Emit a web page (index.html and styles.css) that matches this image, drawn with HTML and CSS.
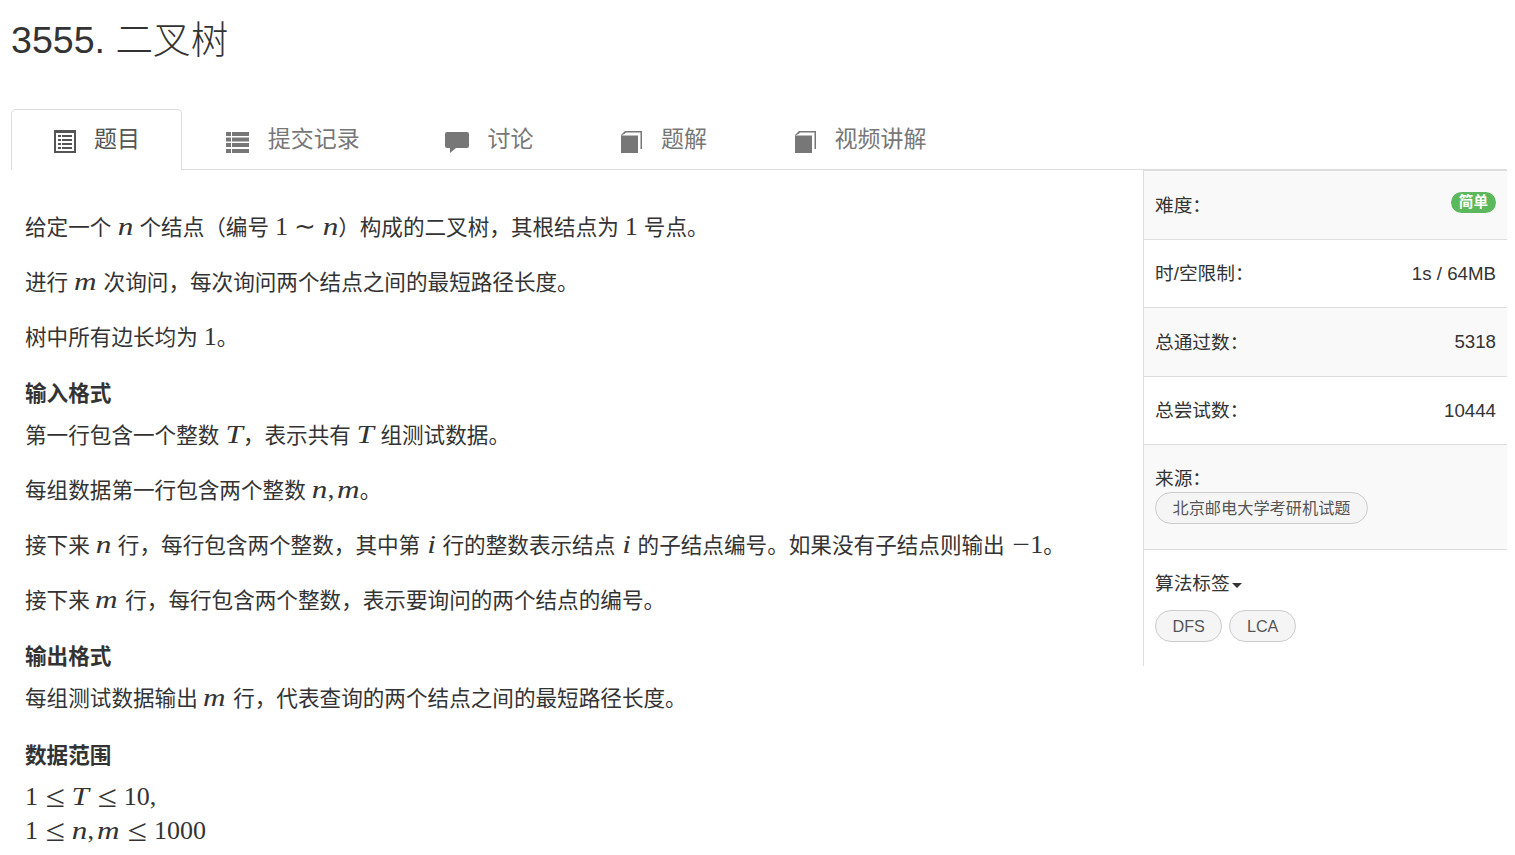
FILE: index.html
```html
<!DOCTYPE html>
<html lang="zh-CN">
<head>
    <meta charset="UTF-8">
    <meta name="viewport" content="width=device-width, initial-scale=1.0">
    <title>3555. 二叉树</title>
    <link rel="stylesheet" href="styles.css">
</head>
<body>
    <div class="container">
        <h1 class="title">3555. 二叉树</h1>

        <div class="tabs">
            <a class="tab active">
                <svg class="tab-icon" viewBox="0 0 24 23"><path fill-rule="evenodd" d="M2 0h22v23H2zM4 3v18h18V3z"/><path d="M6 5h3v2H6zM10 5h10v2H10zM6 9h3v2H6zM10 9h10v2H10zM6 13h3v2H6zM10 13h10v2H10zM6 17h3v2H6zM10 17h10v2H10z"/></svg>
                <span>题目</span>
            </a>
            <a class="tab">
                <svg class="tab-icon" viewBox="0 0 24 23"><path d="M0 2h5v4H0zM6 2h17v4H6zM0 7.500h5v4H0zM6 7.500h17v4H6zM0 13h5v4H0zM6 13h17v4H6zM0 19h5v4H0zM6 19h17v4H6z"/></svg>
                <span>提交记录</span>
            </a>
            <a class="tab">
                <svg class="tab-icon" viewBox="0 0 24 23"><path d="M2 2h20a2 2 0 0 1 2 2v12a2 2 0 0 1-2 2H11l-6 5v-5H2a2 2 0 0 1-2-2V4a2 2 0 0 1 2-2z"/></svg>
                <span>讨论</span>
            </a>
            <a class="tab">
                <svg class="tab-icon" viewBox="0 0 24 23"><path d="M2 5l4-4h17v18h-1.500V2.500H7L5.500 4H20v0H5L2 6z"/><path d="M2 5.500h17V23H2z"/></svg>
                <span>题解</span>
            </a>
            <a class="tab">
                <svg class="tab-icon" viewBox="0 0 24 23"><path d="M2 5l4-4h17v18h-1.500V2.500H7L5.500 4H20v0H5L2 6z"/><path d="M2 5.500h17V23H2z"/></svg>
                <span>视频讲解</span>
            </a>
        </div>

        <div class="content">
            <div class="problem">
                <p>给定一个 <span class="math"><i>n</i></span> 个结点（编号 <span class="math">1<span class="sim">∼</span><i>n</i></span>）构成的二叉树，其根结点为 <span class="math">1</span> 号点。</p>
                <p>进行 <span class="math"><i class="wide">m</i></span> 次询问，每次询问两个结点之间的最短路径长度。</p>
                <p>树中所有边长均为 <span class="math">1</span>。</p>

                <h4>输入格式</h4>
                <p>第一行包含一个整数 <span class="math"><i>T</i></span>，表示共有 <span class="math"><i>T</i></span> 组测试数据。</p>
                <p>每组数据第一行包含两个整数 <span class="math"><i>n</i>,<i class="after-comma">m</i></span>。</p>
                <p>接下来 <span class="math"><i>n</i></span> 行，每行包含两个整数，其中第 <span class="math"><i>i</i></span> 行的整数表示结点 <span class="math"><i>i</i></span> 的子结点编号。如果没有子结点则输出 <span class="math"><span class="minus">−</span>1</span>。</p>
                <p>接下来 <span class="math"><i class="wide">m</i></span> 行，每行包含两个整数，表示要询问的两个结点的编号。</p>

                <h4>输出格式</h4>
                <p>每组测试数据输出 <span class="math"><i class="wide">m</i></span> 行，代表查询的两个结点之间的最短路径长度。</p>

                <h4>数据范围</h4>
                <p><span class="math">1<span class="rel">≤</span><i class="wide">T</i><span class="rel">≤</span>10,</span><br><span class="math">1<span class="rel">≤</span><i>n</i>,<i class="after-comma wide">m</i><span class="rel">≤</span>1000</span></p>
            </div>

            <div class="sidebar">
                <div class="row row-tall striped">
                    <span class="label">难度：</span>
                    <span class="badge">简单</span>
                </div>
                <div class="row">
                    <span class="label">时/空限制：</span>
                    <span>1s / 64MB</span>
                </div>
                <div class="row row-tall striped">
                    <span class="label">总通过数：</span>
                    <span>5318</span>
                </div>
                <div class="row">
                    <span class="label">总尝试数：</span>
                    <span>10444</span>
                </div>
                <div class="block striped source">
                    <div>来源：</div>
                    <a class="pill">北京邮电大学考研机试题</a>
                </div>
                <div class="block tags">
                    <div class="tags-head">算法标签<span class="caret"></span></div>
                    <div class="tag-list">
                        <a class="pill">DFS</a>
                        <a class="pill">LCA</a>
                    </div>
                </div>
            </div>
        </div>
    </div>
</body>
</html>
```

FILE: styles.css
```css
body {
    font-family: "Liberation Sans", "Noto Sans CJK SC", sans-serif;
    margin: 0;
    padding: 0 8px 0 11px;
    background-color: white;
    color: #333;
    overflow: hidden;
}

.title {
    font-size: 37.600px;
    font-weight: 300;
    line-height: 40px;
    margin: 0;
    padding: 20px 0 49px;
}

.tabs {
    display: flex;
    height: 60px;
    border-bottom: 1px solid #ddd;
}

.tab {
    display: flex;
    align-items: flex-start;
    gap: 18px;
    padding: 12px 41.800px 0;
    font-size: 23px;
    line-height: 35px;
    color: #777;
    border: 1px solid transparent;
    border-bottom: none;
    border-radius: 5px 5px 0 0;
    height: 61px;
    box-sizing: border-box;
}

.tab.active {
    color: #555;
    border-color: #ddd;
    background-color: white;
    padding-left: 40px;
    padding-right: 41px;
    margin-right: 1px;
}

.tab-icon {
    width: 24px;
    height: 23px;
    margin-top: 8px;
    fill: currentColor;
    flex-shrink: 0;
}

.content {
    display: flex;
    align-items: flex-start;
}

.problem {
    flex: 1;
    min-width: 0;
    padding: 41px 14px 0;
    font-size: 21.600px;
    line-height: 34.600px;
}

.problem p {
    margin: 0 0 20.300px;
}

.problem h4 {
    font-size: 21.600px;
    line-height: 34px;
    font-weight: bold;
    margin: 0 0 8px;
    padding-top: 1.500px;
}

.math {
    font-family: "Liberation Serif", serif;
    font-size: 26px;
    line-height: 0;
}

.math i {
    display: inline-block;
    margin: 0 0.060em;
    transform: scaleX(1.2);
}

.math i.wide {
    margin-right: 0.120em;
}

.math i.after-comma {
    margin-left: 5px;
}

.rel {
    display: inline-block;
    margin: 0 9.500px;
    transform: scale(1.35, 1.2);
}

.sim {
    display: inline-block;
    margin: 0 6px;
}

.minus {
    display: inline-block;
    margin: 0 2px 0 3px;
    transform: scaleX(1.2);
}

.sidebar {
    width: 363px;
    flex-shrink: 0;
    border-left: 1px solid #ddd;
    border-top: 1px solid #ddd;
    font-size: 18.700px;
}

.row {
    display: flex;
    justify-content: space-between;
    align-items: center;
    height: 67px;
    padding: 0 11px;
    border-bottom: 1px solid #ddd;
}

.row-tall {
    height: 68px;
}

.label {
    margin-bottom: 4px;
}

.striped {
    background-color: #f9f9f9;
}

.block {
    padding: 0 11px;
}

.source {
    height: 105px;
    padding-top: 21px;
    box-sizing: border-box;
    line-height: 26px;
    border-bottom: 1px solid #ddd;
}

.tags {
    height: 116px;
    box-sizing: border-box;
    padding-top: 21px;
    line-height: 26px;
}

.tag-list {
    display: flex;
    gap: 7px;
    margin-top: 13px;
}

.pill {
    display: inline-block;
    box-sizing: border-box;
    height: 32px;
    line-height: 30px;
    padding: 0 16.500px;
    font-size: 16.200px;
    color: #555;
    background-color: #f5f5f5;
    border: 1px solid #ccc;
    border-radius: 16px;
}

.badge {
    font-size: 14.600px;
    font-weight: bold;
    line-height: 21px;
    padding: 0 8px;
    color: white;
    background-color: #5cb85c;
    border-radius: 11px;
    margin-top: -5px;
}

.caret {
    display: inline-block;
    margin-left: 2px;
    vertical-align: middle;
    border-top: 5px solid #333;
    border-left: 5px solid transparent;
    border-right: 5px solid transparent;
}
```
